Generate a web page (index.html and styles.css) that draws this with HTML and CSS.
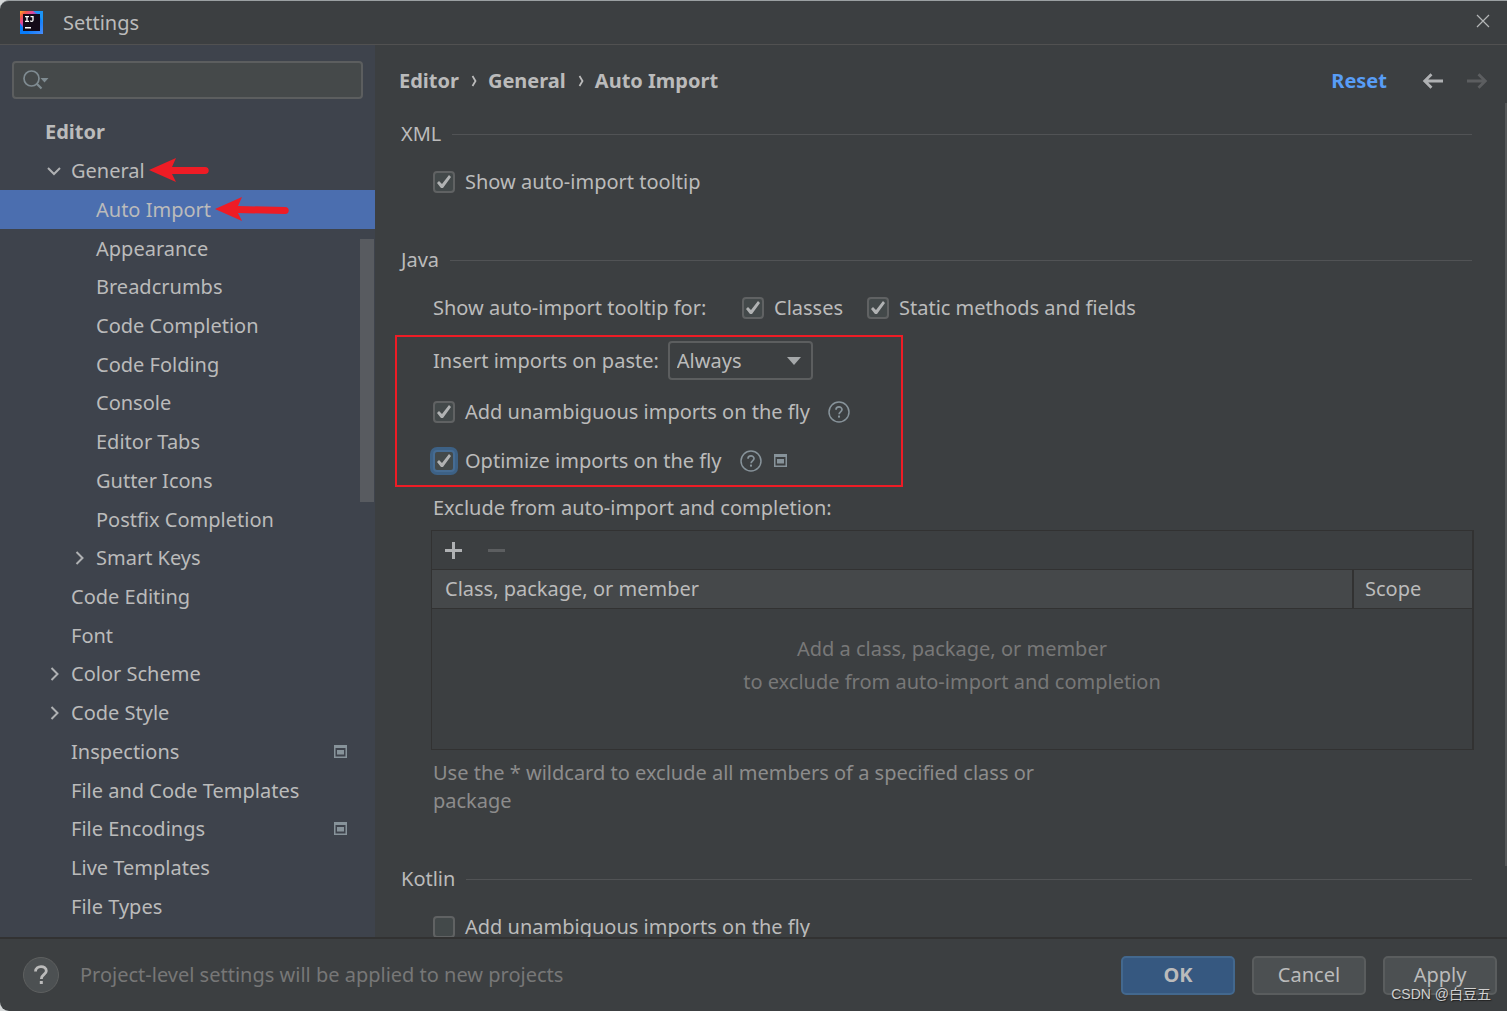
FILE: index.html
```html
<!DOCTYPE html>
<html lang="en">
<head>
<meta charset="utf-8">
<title>Settings</title>
<link rel="stylesheet" href="styles.css">
</head>
<body>
<svg class="defs" aria-hidden="true">
  <symbol id="chevron-right" viewBox="0 0 16 16"><path d="M5.500 2 11.500 8 5.500 14" fill="none" stroke="#afb1b3" stroke-width="2"/></symbol>
  <symbol id="chevron-down" viewBox="0 0 16 16"><path d="M2 5 8 11 14 5" fill="none" stroke="#afb1b3" stroke-width="2"/></symbol>
  <symbol id="project" viewBox="0 0 14 14"><path d="M0 0H13V13H0ZM1.500 3V11.500H11.500V3Z" fill="#87939a" fill-rule="evenodd"/><rect x="3" y="5" width="7" height="4.500" fill="#87939a"/></symbol>
  <symbol id="help" viewBox="0 0 22 22"><circle cx="11" cy="11" r="10" fill="none" stroke="#87939a" stroke-width="1.500"/><path d="M8 8.800C8 5 14 5 14 8.600C14 11 11.100 10.800 11.100 13.300" fill="none" stroke="#87939a" stroke-width="1.700"/><rect x="10" y="14.600" width="2" height="2" fill="#87939a"/></symbol>
</svg>
<div class="window">
  <header class="titlebar">
    <svg class="logo" viewBox="0 0 23 23">
      <defs>
        <linearGradient id="lg" x1="0" y1="0" x2="1" y2="1"><stop offset="0" stop-color="#fdb024"/><stop offset=".15" stop-color="#f4564a"/><stop offset=".3" stop-color="#e0469a"/><stop offset=".45" stop-color="#5b5ce0"/><stop offset=".6" stop-color="#087cfa"/><stop offset="1" stop-color="#4a8cf8"/></linearGradient>
      </defs>
      <rect width="23" height="23" fill="url(#lg)"/><path d="M13 0H23V12L19 4Z" fill="#1c94f5"/><path d="M0 12V23H10L4 18Z" fill="#087cfa"/>
      <rect x="3" y="3" width="17" height="17" fill="#140a18"/>
      <path d="M5 5.700H9M7 5.700V10.300M5 10.300H9M10.500 5.700H13V9C13 10.600 11.200 10.600 10.200 9.800" fill="none" stroke="#fff" stroke-width="1.300"/><rect x="5" y="16" width="6" height="1.500" fill="#fff"/>
    </svg>
    <h1 class="title">Settings</h1>
    <button class="icon-button close" aria-label="Close"><svg width="14" height="14" viewBox="0 0 14 14"><path d="M1 1 13 13M13 1 1 13" stroke="#b4b6b7" stroke-width="1.200"/></svg></button>
  </header>

  <div class="main">
    <aside class="sidebar">
      <div class="search">
        <svg width="26" height="20" viewBox="0 0 26 20"><circle cx="8.500" cy="8.500" r="7.500" fill="none" stroke="#7f8b91" stroke-width="1.700"/><path d="M13.500 13.500 18.500 18.500" stroke="#7f8b91" stroke-width="2.200"/><path d="M17.500 8H25.500L21.500 12.500Z" fill="#7f8b91"/></svg>
        <input class="search-input" type="text" aria-label="Search settings">
      </div>
      <nav class="tree">
        <a href="#" class="item root">Editor</a>
        <a href="#" class="item level-1"><svg class="twisty"><use href="#chevron-down"/></svg>General
          <svg class="arrow" width="60" height="26" viewBox="0 0 60 26"><path d="M0 12 27 0 23 9H56C61 9 61 16 56 16H23L27 24Z" fill="#ee1c25"/></svg></a>
        <a href="#" class="item level-2 selected">Auto Import
          <svg class="arrow" width="74" height="26" viewBox="0 0 74 26"><path d="M0 12 27 0 23 9 70 10C75 10 75 17 70 17L23 16 27 24Z" fill="#ee1c25"/></svg></a>
        <a href="#" class="item level-2">Appearance</a>
        <a href="#" class="item level-2">Breadcrumbs</a>
        <a href="#" class="item level-2">Code Completion</a>
        <a href="#" class="item level-2">Code Folding</a>
        <a href="#" class="item level-2">Console</a>
        <a href="#" class="item level-2">Editor Tabs</a>
        <a href="#" class="item level-2">Gutter Icons</a>
        <a href="#" class="item level-2">Postfix Completion</a>
        <a href="#" class="item level-2"><svg class="twisty"><use href="#chevron-right"/></svg>Smart Keys</a>
        <a href="#" class="item level-1">Code Editing</a>
        <a href="#" class="item level-1">Font</a>
        <a href="#" class="item level-1"><svg class="twisty"><use href="#chevron-right"/></svg>Color Scheme</a>
        <a href="#" class="item level-1"><svg class="twisty"><use href="#chevron-right"/></svg>Code Style</a>
        <a href="#" class="item level-1">Inspections<svg class="project"><use href="#project"/></svg></a>
        <a href="#" class="item level-1">File and Code Templates</a>
        <a href="#" class="item level-1">File Encodings<svg class="project"><use href="#project"/></svg></a>
        <a href="#" class="item level-1">Live Templates</a>
        <a href="#" class="item level-1">File Types</a>
      </nav>
      <div class="tree-thumb"></div>
    </aside>

    <main class="content">
      <div class="page-head">
        <nav class="crumbs"><a href="#">Editor</a><svg class="sep" viewBox="0 0 29 28"><path d="M13.500 9 16.500 14 13.500 19" fill="none" stroke="#bbb" stroke-width="1.800"/></svg><a href="#">General</a><svg class="sep" viewBox="0 0 29 28"><path d="M13.500 9 16.500 14 13.500 19" fill="none" stroke="#bbb" stroke-width="1.800"/></svg><a href="#">Auto Import</a></nav>
        <a href="#" class="reset">Reset</a>
        <button class="icon-button" aria-label="Back"><svg width="22" height="16" viewBox="0 0 22 16"><path d="M21 8H3M9.500 1.200 2.700 8 9.500 14.800" fill="none" stroke="#afb1b3" stroke-width="2.800"/></svg></button>
        <button class="icon-button forward" aria-label="Forward" disabled><svg width="22" height="16" viewBox="0 0 22 16"><path d="M1 8H19M12.500 1.200 19.300 8 12.500 14.800" fill="none" stroke="#5c5e60" stroke-width="2.800"/></svg></button>
      </div>

      <section class="group">
        <h2 class="group-title">XML</h2>
        <div class="row"><label class="check"><input type="checkbox" checked>Show auto-import tooltip</label></div>
      </section>

      <section class="group">
        <h2 class="group-title">Java</h2>
        <div class="row tooltip-row">
          <span class="lead">Show auto-import tooltip for:</span>
          <label class="check short"><input type="checkbox" checked>Classes</label>
          <label class="check"><input type="checkbox" checked>Static methods and fields</label>
        </div>
        <div class="marked">
          <div class="row paste-row">
            <label for="paste">Insert imports on paste:</label>
            <span class="select">
              <select id="paste"><option>Always</option><option>Never</option><option>Ask</option></select>
              <svg class="caret" width="14" height="8" viewBox="0 0 14 8"><path d="M0 0H14L7 8Z" fill="#a5a8aa"/></svg>
            </span>
          </div>
          <div class="row"><label class="check"><input type="checkbox" checked>Add unambiguous imports on the fly</label><svg class="help-icon"><use href="#help"/></svg></div>
          <div class="row"><label class="check"><input type="checkbox" class="focused" checked>Optimize imports on the fly</label><svg class="help-icon"><use href="#help"/></svg><svg class="project"><use href="#project"/></svg></div>
          <div class="marker"></div>
        </div>
        <div class="row">Exclude from auto-import and completion:</div>
        <div class="exclude">
          <div class="toolbar">
            <button class="icon-button" aria-label="Add"><svg width="17" height="17" viewBox="0 0 17 17"><path d="M8.500 0V17M0 8.500H17" stroke="#afb1b3" stroke-width="3"/></svg></button>
            <button class="icon-button" aria-label="Remove" disabled><svg width="17" height="17" viewBox="0 0 17 17"><path d="M0 8.500H17" stroke="#5c5e60" stroke-width="3"/></svg></button>
          </div>
          <table class="table">
            <thead><tr><th>Class, package, or member</th><th class="scope">Scope</th></tr></thead>
            <tbody><tr><td colspan="2">Add a class, package, or member<br>to exclude from auto-import and completion</td></tr></tbody>
          </table>
        </div>
        <p class="hint">Use the * wildcard to exclude all members of a specified class or package</p>
      </section>

      <section class="group">
        <h2 class="group-title">Kotlin</h2>
        <div class="row"><label class="check"><input type="checkbox">Add unambiguous imports on the fly</label></div>
      </section>
      <div class="content-thumb"></div>
    </main>
  </div>

  <footer class="footer">
    <button class="help-button" aria-label="Help"><svg width="16" height="20" viewBox="0 0 16 20"><path d="M2.500 6.500C2.500 0 13.500 .2 13.300 6C13.300 9.500 8.300 9.300 8.300 14" fill="none" stroke="#bbb" stroke-width="2.800"/><rect x="6.800" y="16" width="3" height="3" fill="#bbb"/></svg></button>
    <span class="note">Project-level settings will be applied to new projects</span>
    <button class="button primary">OK</button>
    <button class="button">Cancel</button>
    <button class="button">Apply</button>
    <span class="watermark">CSDN @白豆五</span>
  </footer>
</div>
</body>
</html>
```
FILE: styles.css
```css
* { box-sizing: border-box; }

body {
  margin: 0;
  background: #d5d8d9;
  color: #bbbbbb;
  font: 20px/28px "Noto Sans", "Open Sans", "Noto Sans CJK SC", sans-serif;
}

a { color: inherit; text-decoration: none; }
h1, h2, p { margin: 0; font-size: inherit; font-weight: 400; }
button, input, select { font: inherit; color: inherit; }

.defs { position: absolute; width: 0; height: 0; }

.window {
  display: flex;
  flex-direction: column;
  height: 100vh;
  overflow: hidden;
  background: #3c3f41;
  border-top: 1px solid #9ba0a2;
  border-radius: 9px 0 0 9px;
}

.icon-button {
  display: flex;
  padding: 0;
  border: 0;
  background: none;
}

/* Title bar */
.titlebar {
  display: flex;
  align-items: center;
  flex: none;
  height: 44px;
  padding: 0 17px 0 20px;
  border-bottom: 1px solid #515151;
}
.logo { width: 23px; height: 23px; }
.title { margin-left: 20px; }
.close { margin-left: auto; padding-bottom: 3px; }

.main { display: flex; flex: 1; min-height: 0; }

/* Sidebar */
.sidebar {
  position: relative;
  display: flex;
  flex-direction: column;
  flex: none;
  width: 375px;
  padding: 16px 0 11px;
  background: #3e434c;
}
.search {
  display: flex;
  align-items: center;
  height: 38px;
  margin: 0 12px 14px;
  padding-left: 9px;
  border: 2px solid #5c5e5f;
  border-radius: 4px;
  background: #45494a;
}
.search-input {
  flex: 1;
  min-width: 0;
  border: 0;
  outline: 0;
  background: none;
}
.tree { display: flex; flex-direction: column; flex: 1; }
.item { display: flex; align-items: center; flex: 1; white-space: nowrap; }
.root { padding-left: 45px; font-weight: 700; }
.level-1 { padding-left: 71px; }
.level-2 { padding-left: 96px; }
.selected { background: #4b6eaf; }
.twisty { width: 16px; height: 16px; margin: 0 9px 0 -25px; }
.arrow { flex: none; margin-left: 4px; }
.project { width: 14px; height: 14px; }
.item .project { margin: 0 27px 0 auto; }
.tree-thumb {
  position: absolute;
  top: 194px;
  right: 1px;
  width: 14px;
  height: 263px;
  background: #585b60;
}

/* Page */
.content {
  position: relative;
  flex: 1;
  min-width: 0;
  padding: 0 35px 0 26px;
  overflow: hidden;
}
.page-head {
  display: flex;
  align-items: center;
  height: 71px;
  margin: 0 -16px 2px -2px;
  font-weight: 700;
}
.crumbs { display: flex; margin-right: auto; }
.sep { width: 29px; height: 28px; }
.reset { margin-right: 35px; color: #589df6; }
.forward { margin-left: 22px; }

.group { margin-bottom: 45px; }
.group-title {
  display: flex;
  align-items: center;
  gap: 11px;
  height: 32px;
  margin-bottom: 15px;
}
.group-title::after { content: ""; flex: 1; height: 1px; background: #515355; }

.row { display: flex; align-items: center; height: 34px; margin-left: 32px; }
.tooltip-row { gap: 26px; }
.lead { width: 283px; }
.short { width: 99px; }
.paste-row { height: 39px; gap: 9px; }
.marked {
  position: relative;
  display: flex;
  flex-direction: column;
  gap: 15px;
  margin: 16px 0 13px;
}
.marker {
  position: absolute;
  top: -6px;
  left: -6px;
  width: 508px;
  height: 152px;
  border: 2px solid #ee1c25;
  pointer-events: none;
}

.check { display: flex; align-items: center; gap: 10px; }
.check input {
  appearance: none;
  flex: none;
  width: 22px;
  height: 22px;
  margin: 0;
  border: 2px solid #606263;
  border-radius: 4px;
  background: #43494a;
}
.check input:checked::before {
  content: "";
  display: block;
  width: 18px;
  height: 18px;
  background: #b0b2b3;
  clip-path: polygon(2px 10px, 4px 8px, 7px 11px, 14px 2px, 16px 4px, 8px 15px, 6px 15px);
}
.check .focused { border-color: #466c93; box-shadow: 0 0 0 3px #3d6185; }
.help-icon { width: 22px; height: 22px; margin-left: 18px; }
.row .project { margin-left: 12px; }

.select { position: relative; display: flex; }
.select select {
  appearance: none;
  width: 145px;
  height: 39px;
  padding: 0 30px 0 7px;
  border: 2px solid #5c5e5f;
  border-radius: 4px;
  background: #3c3f41;
}
.caret { position: absolute; top: 16px; right: 12px; pointer-events: none; }

/* Exclusions table */
.exclude {
  margin: 5px -2px 0 30px;
  border: 1px solid #323232;
  border-right-width: 2px;
}
.toolbar { display: flex; align-items: center; gap: 26px; height: 38px; padding-left: 13px; }
.table { width: 100%; border-collapse: separate; border-spacing: 0; table-layout: fixed; }
.table th {
  height: 40px;
  padding: 0 13px;
  border: solid #323232;
  border-width: 1px 0;
  background: #45484a;
  font-weight: 400;
  text-align: left;
}
.table .scope { width: 120px; box-shadow: inset 2px 0 #323232; }
.table td {
  height: 140px;
  padding: 0 0 28px;
  color: #787878;
  line-height: 33px;
  text-align: center;
}
.hint { max-width: 660px; margin: 9px 0 48px 32px; color: #8c8c8c; }
.content-thumb {
  position: absolute;
  top: 58px;
  right: 0;
  width: 2px;
  height: 763px;
  background: #555758;
}

/* Footer */
.footer {
  position: relative;
  display: flex;
  align-items: center;
  flex: none;
  gap: 17px;
  height: 74px;
  padding: 0 10px 0 23px;
  border-top: 2px solid #323232;
}
.help-button {
  display: flex;
  align-items: center;
  justify-content: center;
  width: 36px;
  height: 36px;
  padding: 0;
  border: 1px solid #5e6060;
  border-radius: 50%;
  background: #4c5052;
}
.note { margin: 0 auto 0 4px; color: #777777; }
.button {
  width: 114px;
  height: 39px;
  padding: 0;
  border: 2px solid #5a5d5e;
  border-radius: 5px;
  background: #4c5052;
}
.primary { border-color: #43688e; background: #365880; font-weight: 700; }
.watermark {
  position: absolute;
  right: 16px;
  bottom: 6px;
  font: 14px/22px "Liberation Sans", "Noto Sans CJK SC", sans-serif;
  color: #d0d0d0;
  text-shadow: 1px 1px 1px #222222;
}
```
